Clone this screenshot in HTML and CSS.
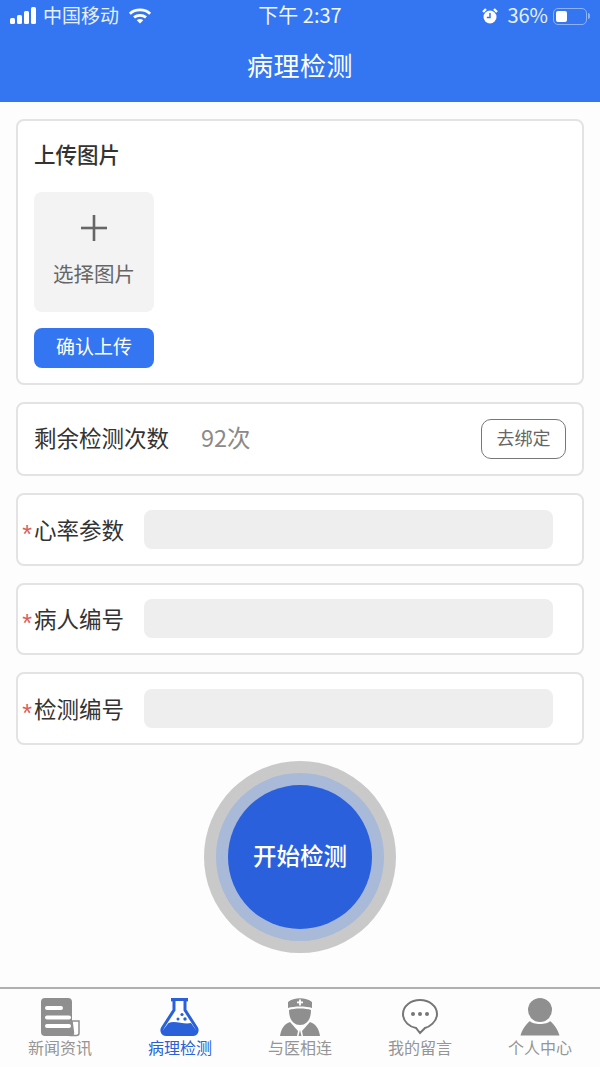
FILE: index.html
```html
<!DOCTYPE html>
<html lang="zh-CN">
<head>
  <meta charset="UTF-8" />
  <title>病理检测</title>
  <link rel="stylesheet" href="styles.css">
</head>
<body>
  <div class="app">
    <header class="top">
      <div class="status">
        <div class="status-left">
          <svg class="signal" width="27" height="18" viewBox="0 0 27 18" fill="#fff">
            <rect x="0" y="11" width="5" height="6" rx="1.5"/>
            <rect x="7" y="8" width="5" height="9" rx="1.5"/>
            <rect x="14" y="4" width="5" height="13" rx="1.5"/>
            <rect x="21" y="0" width="5" height="17" rx="1.5"/>
          </svg>
          <span>中国移动</span>
          <svg class="wifi" width="24" height="18" viewBox="0 0 26 18" fill="none" stroke="#fff" stroke-width="3">
            <path d="M2 6.500 C8 1 18 1 24 6.500"/>
            <path d="M6.500 10.500 C10 7.500 16 7.500 19.500 10.500"/>
            <path d="M13 17 L9.500 13.500 C11.500 12 14.500 12 16.500 13.500 Z" fill="#fff" stroke="none"/>
          </svg>
        </div>
        <div class="status-time">下午 2:37</div>
        <div class="status-right">
          <svg class="alarm" width="16" height="16" viewBox="0 0 16 16">
            <circle cx="8" cy="9" r="6.500" fill="#fff"/>
            <path d="M1 4 L4 1 M15 4 L12 1" stroke="#fff" stroke-width="2.400"/>
            <path d="M8 5 V9.500 H4.800" stroke="#3476f1" stroke-width="1.500" fill="none"/>
          </svg>
          <span>36%</span>
          <div class="battery"><div class="battery-fill"></div></div>
          <div class="battery-tip"></div>
        </div>
      </div>
      <h1 class="title">病理检测</h1>
    </header>

    <main class="content">
      <section class="card upload">
        <h2 class="upload-title">上传图片</h2>
        <div class="picker">
          <svg width="26" height="26" viewBox="0 0 26 26" fill="#666">
            <rect x="0" y="11.700" width="26" height="2.600"/>
            <rect x="11.700" y="0" width="2.600" height="26"/>
          </svg>
          <span>选择图片</span>
        </div>
        <button class="confirm">确认上传</button>
      </section>

      <section class="card row remain">
        <span class="label">剩余检测次数</span>
        <span class="count">92次</span>
        <button class="unbind">去绑定</button>
      </section>

      <section class="card row field">
        <span class="star">*</span><span class="label">心率参数</span>
        <div class="input"></div>
      </section>
      <section class="card row field">
        <span class="star">*</span><span class="label">病人编号</span>
        <div class="input"></div>
      </section>
      <section class="card row field">
        <span class="star">*</span><span class="label">检测编号</span>
        <div class="input"></div>
      </section>

      <div class="start-wrap">
        <div class="ring-outer">
          <div class="ring-inner">
            <button class="start">开始检测</button>
          </div>
        </div>
      </div>
    </main>

    <nav class="tabs">
      <div class="tab">
        <svg width="40" height="40" viewBox="0 0 40 40">
          <path d="M1 5 a4 4 0 0 1 4 -4 H28 a4 4 0 0 1 4 4 V24 H33 V39 H5 a4 4 0 0 1 -4 -4 Z" fill="#8f8f8f"/>
          <path d="M32 24 h7 v12 a2.500 2.500 0 0 1 -2.500 2.500 H32 a3 3 0 0 0 1.500 -2.500 Z" fill="#fff" stroke="#8f8f8f" stroke-width="1.500"/>
          <rect x="5" y="9" width="18" height="4" rx="2" fill="#fff"/>
          <rect x="5" y="18.500" width="26" height="4" rx="2" fill="#fff"/>
          <rect x="5" y="27" width="26" height="4" rx="2" fill="#fff"/>
        </svg>
        <span>新闻资讯</span>
      </div>
      <div class="tab active">
        <svg width="40" height="40" viewBox="0 0 40 40">
          <rect x="11" y="1" width="17" height="3.400" fill="#2a60d8"/>
          <path d="M14 4 V13 L2.500 31 C1 34 2.500 37.500 6 37.500 H33 C36.500 37.500 38 34 36.500 31 L25 13 V4" fill="#fff" stroke="#2a60d8" stroke-width="3"/>
          <path d="M8.500 26 C15 23 24 28 31 26 L36 33 C37 35.500 35.500 37.500 33 37.500 H6 C3.500 37.500 2 35.500 3 33 Z" fill="#2a60d8"/>
          <circle cx="18" cy="22" r="1.500" fill="#2a60d8"/>
          <circle cx="22" cy="17.500" r="1.600" fill="#2a60d8"/>
          <circle cx="25" cy="22" r="1.700" fill="#2a60d8"/>
        </svg>
        <span>病理检测</span>
      </div>
      <div class="tab">
        <svg width="40" height="40" viewBox="0 0 40 40" fill="#8f8f8f">
          <path d="M8 11 V5 C14 0 26 0 32 5 V11 C26 9 14 9 8 11 Z"/>
          <rect x="17" y="4.500" width="6" height="1.800" fill="#fff"/>
          <rect x="19.100" y="2.500" width="1.800" height="6" fill="#fff"/>
          <path d="M9 13 C14 11 26 11 31 13 C31 22 27 28 20 28 C13 28 9 22 9 13 Z"/>
          <path d="M10 25 C4 27 1 32 0 39 H17 L18 34 Z"/>
          <path d="M30 25 C36 27 39 32 40 39 H23 L22 34 Z"/>
          <path d="M20 33 L18.500 39 H21.500 Z"/>
        </svg>
        <span>与医相连</span>
      </div>
      <div class="tab">
        <svg width="40" height="40" viewBox="0 0 40 40">
          <path d="M20 3 C29 3 37 9 37 17 C37 25 29 30 25 31 L20 36 L16 31 C10 30 3 25 3 17 C3 9 11 3 20 3 Z" fill="#fff" stroke="#777" stroke-width="2"/>
          <circle cx="13" cy="17" r="2" fill="#777"/>
          <circle cx="20" cy="17" r="2" fill="#777"/>
          <circle cx="27" cy="17" r="2" fill="#777"/>
        </svg>
        <span>我的留言</span>
      </div>
      <div class="tab">
        <svg width="40" height="40" viewBox="0 0 40 40" fill="#8f8f8f">
          <circle cx="20" cy="13" r="12"/>
          <path d="M10 24 C12 28 28 28 30 24 C34 27 38 33 39.500 38.500 H0.500 C2 33 6 27 10 24 Z"/>
        </svg>
        <span>个人中心</span>
      </div>
    </nav>
  </div>
</body>
</html>
```

FILE: styles.css
```css
* {
  box-sizing: border-box;
}
html, body {
  margin: 0;
  padding: 0;
}
body {
  font-family: "Noto Sans CJK SC", "Liberation Sans", sans-serif;
  background: #fdfdfd;
}
button {
  font-family: inherit;
  border: none;
  padding: 0;
}
.app {
  width: 600px;
  height: 1067px;
  display: flex;
  flex-direction: column;
  overflow: hidden;
}
.top {
  height: 102px;
  background: #3476f1;
  color: #fff;
}
.status {
  height: 32px;
  padding: 0 10px;
  display: flex;
  align-items: center;
  justify-content: space-between;
  font-size: 19px;
  color: #e6efff;
}
.status span, .status-time {
  padding-bottom: 3px;
}
.status-left {
  width: 200px;
  display: flex;
  align-items: center;
  gap: 6px;
}
.status-left .wifi {
  margin-left: 3px;
}
.status-time {
  font-size: 20px;
  color: #f2f6ff;
}
.status-right {
  width: 200px;
  display: flex;
  align-items: center;
  justify-content: flex-end;
  gap: 5px;
  font-size: 20px;
}
.alarm {
  margin-right: 4px;
}
.battery {
  width: 34px;
  height: 17px;
  border: 1px solid #8db2f7;
  border-radius: 5px;
  padding: 2px;
}
.battery-fill {
  width: 11px;
  height: 100%;
  background: #fff;
  border-radius: 2px;
}
.battery-tip {
  width: 2px;
  height: 6px;
  margin-left: -4px;
  background: #8db2f7;
  border-radius: 0 2px 2px 0;
}
.title {
  margin: 0;
  height: 70px;
  line-height: 66px;
  text-align: center;
  font-size: 26px;
  font-weight: 400;
  letter-spacing: 0.5px;
}
.content {
  flex: 1;
  padding: 17px 16px 0;
  display: flex;
  flex-direction: column;
  gap: 17px;
}
.card {
  background: #fff;
  border: 2px solid #e3e3e3;
  border-radius: 8px;
}
.upload {
  height: 266px;
  padding: 16px;
}
.upload-title {
  margin: 0 0 16px;
  font-size: 21.500px;
  line-height: 34px;
  font-weight: 500;
  color: #333;
  height: 39px;
}
.picker {
  width: 120px;
  height: 120px;
  background: #f3f3f3;
  border-radius: 8px;
  display: flex;
  flex-direction: column;
  align-items: center;
  padding-top: 23px;
  gap: 17px;
  font-size: 20.500px;
  line-height: 30px;
  color: #666;
}
.confirm {
  display: block;
  width: 120px;
  height: 40px;
  margin-top: 16px;
  padding-bottom: 5px;
  background: #3476f1;
  color: #fff;
  font-size: 19px;
  border-radius: 8px;
}
.row {
  height: 72.500px;
  display: flex;
  align-items: center;
}
.label {
  font-size: 22.500px;
  color: #333;
  padding-bottom: 4px;
}
.remain {
  height: 74px;
  padding: 0 16px;
}
.count {
  margin-left: 32px;
  padding-bottom: 4px;
  font-size: 23.500px;
  color: #8a8a8a;
}
.unbind {
  margin-left: auto;
  width: 85px;
  height: 40px;
  padding-bottom: 4px;
  background: #fff;
  border: 1px solid #777;
  border-radius: 10px;
  color: #666;
  font-size: 18px;
}
.field {
  padding-left: 2px;
}
.field .label {
  padding-bottom: 1px;
}
.star {
  width: 14px;
  font-family: "Liberation Sans", sans-serif;
  font-size: 25px;
  line-height: 25px;
  color: #d9605c;
  text-align: center;
  padding-top: 10px;
}
.input {
  width: 409px;
  height: 39px;
  margin-left: 20px;
  background: #eeeeee;
  border-radius: 8px;
}
.start-wrap {
  display: flex;
  justify-content: center;
  margin-top: -0.500px;
}
.ring-outer {
  width: 192px;
  height: 192px;
  border-radius: 50%;
  background: #c9c9c9;
  padding: 12px;
}
.ring-inner {
  width: 168px;
  height: 168px;
  border-radius: 50%;
  background: #a9b9d8;
  padding: 12px;
}
.start {
  width: 144px;
  height: 144px;
  padding-bottom: 5px;
  border-radius: 50%;
  background: #2a60dc;
  color: #fff;
  font-size: 23.500px;
  font-weight: 500;
}
.tabs {
  height: 80px;
  border-top: 2px solid #b0b0b0;
  display: flex;
  background: #fdfdfd;
}
.tab {
  flex: 1;
  display: flex;
  flex-direction: column;
  align-items: center;
  padding-top: 8px;
  font-size: 16px;
  line-height: 20px;
  color: #959595;
}
.tab.active {
  color: #2a60d8;
}
```
